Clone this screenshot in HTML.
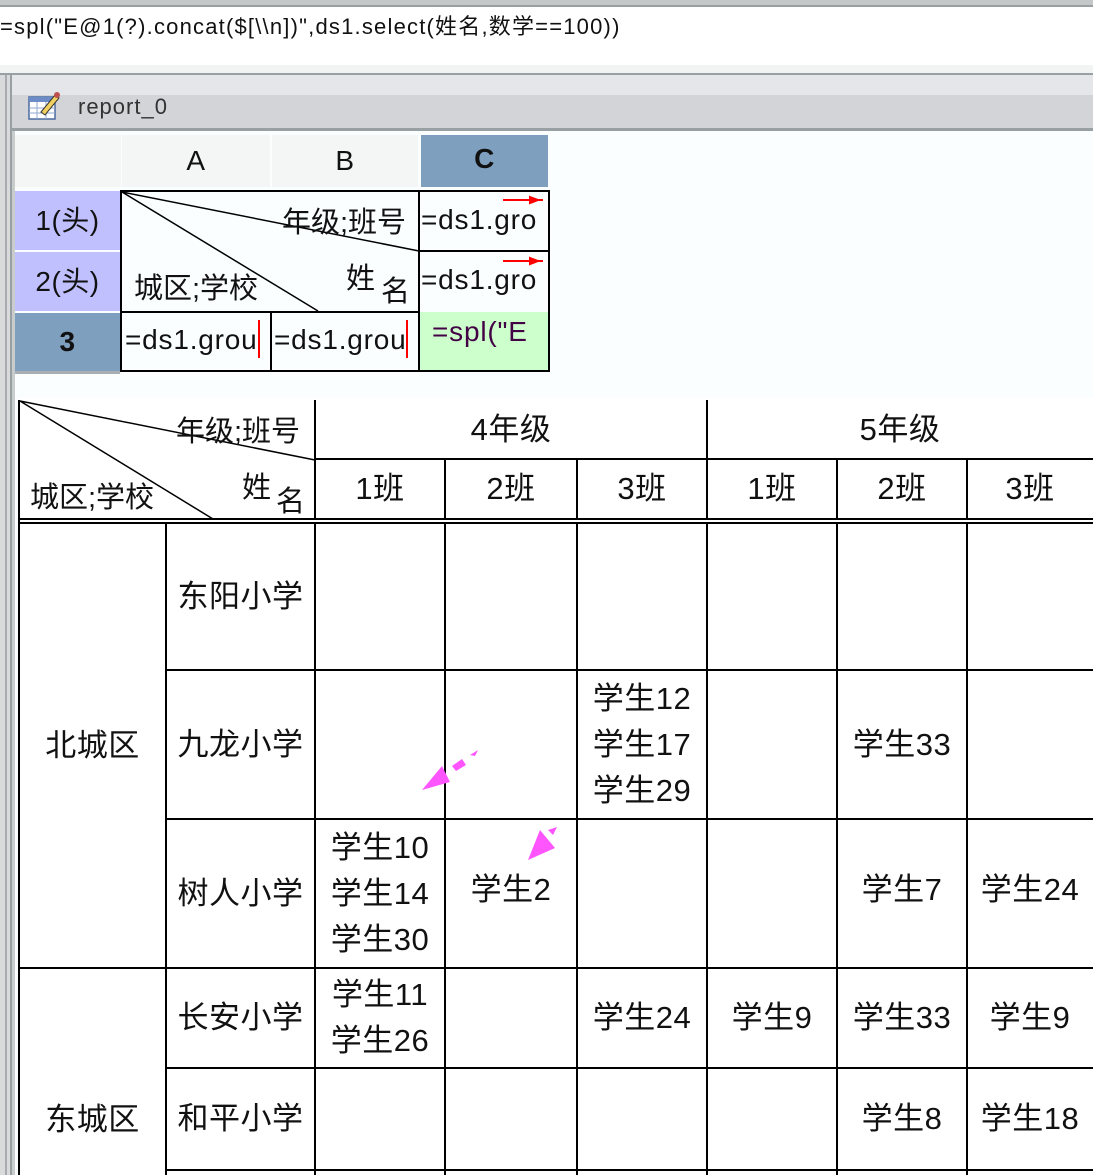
<!DOCTYPE html>
<html><head><meta charset="utf-8"><style>
*{margin:0;padding:0;box-sizing:border-box}
html,body{width:1093px;height:1175px;overflow:hidden}
body{background:#fafefe;position:relative;font-family:"Liberation Sans","WenQuanYi Zen Hei","Noto Sans CJK SC",sans-serif;color:#111}
.a{position:absolute;white-space:nowrap}
.c{position:absolute;display:flex;align-items:center;justify-content:center;text-align:center;font-size:31px;line-height:46px;white-space:nowrap;letter-spacing:0.5px}
.s{font-size:28px}
</style></head><body>
<svg class="a" style="left:0;top:0;overflow:hidden" width="1093" height="1175">
<rect x="0" y="0" width="1093" height="5" fill="#c4c8c8"/>
<rect x="0" y="5" width="1093" height="2" fill="#98a0a4"/>
<rect x="0" y="7" width="1093" height="58" fill="#fff"/>
<rect x="0" y="65" width="1093" height="8" fill="#f2f4f4"/>
<rect x="0" y="73" width="1093" height="2" fill="#98a0a4"/>
<rect x="0" y="75" width="12" height="1100" fill="#d8dadc"/>
<rect x="5" y="75" width="2" height="1100" fill="#a8acb0"/>
<rect x="10" y="75" width="2" height="1100" fill="#98a0a4"/>
<rect x="12" y="75" width="1081" height="20" fill="#e4e6ea"/>
<rect x="12" y="95" width="1081" height="34" fill="#d2d4d8"/>
<rect x="12" y="128" width="1081" height="3" fill="#98a0a4"/>
<rect x="12" y="131" width="3" height="1044" fill="#c8cccc"/>
<rect x="29" y="97" width="26" height="22" fill="#fff" stroke="#4a6aa0" stroke-width="1.5"/>
<rect x="29" y="97" width="26" height="5" fill="#6c8cc8"/>
<path d="M29 108h26M29 113h26M37 102v17M46 102v17" stroke="#90a8d0" stroke-width="1"/>
<path d="M41 112l14-17 4 3-14 17z" fill="#f0d060" stroke="#333" stroke-width="1"/>
<circle cx="57" cy="95" r="3" fill="#c05050"/>
<rect x="15" y="135" width="106" height="52" fill="#f4f6f6"/>
<rect x="122" y="135" width="148" height="52" fill="#f4f6f6"/>
<rect x="272" y="135" width="146" height="52" fill="#f4f6f6"/>
<rect x="421" y="135" width="127" height="52" fill="#7f9fbf"/>
<rect x="15" y="191" width="105" height="59" fill="#c0c0fe"/>
<rect x="15" y="252" width="105" height="59" fill="#c0c0fe"/>
<rect x="15" y="313" width="105" height="58" fill="#7f9fbf"/>
<rect x="15" y="371" width="105" height="3" fill="#a8aeb4"/>
<rect x="420" y="312" width="128" height="59" fill="#ccffcc"/>
<g stroke="#000" stroke-width="2" fill="none">
<rect x="121" y="191" width="428" height="180"/>
<path d="M419 191v180M419 251h130M121 312h298M271 312v59"/>
<path d="M122 192L419 251M122 192L318 311" stroke-width="1.5"/>
</g>
<path d="M503 200h40M530 197l8 3-8 3z" stroke="red" stroke-width="2" fill="red"/>
<path d="M503 261h40M530 258l8 3-8 3z" stroke="red" stroke-width="2" fill="red"/>
<path d="M259 320v38M407 320v38" stroke="red" stroke-width="2"/>
<rect x="19" y="398" width="1074" height="777" fill="#fff"/>
<g stroke="#000" stroke-width="2" fill="none">
<path d="M19 400v775M315 400v120M707 400v120M315 459h778M445 459v61M577 459v61M837 459v61M967 459v61M19 519h1074M19 523h1074"/>
<path d="M166 523v652M315 523v652M445 523v652M577 523v652M707 523v652M837 523v652M967 523v652"/>
<path d="M166 670h927M166 819h927M19 968h1074M166 1068h927M166 1170h927"/>
<path d="M20 401L315 460M20 401L213 519" stroke-width="1.5"/>
</g>
<path d="M422 790l20-24 8 16z" fill="#ff55ff"/>
<path d="M452 766l10-7 4 6-10 6zM470 755l8-5-3 6z" fill="#ff55ff"/>
<path d="M528 860l12-30 15 18z" fill="#ff55ff"/>
<path d="M548 830l9-3-4 8z" fill="#ff55ff"/>
</svg>
<div class="a" style="left:0;top:9px;font-size:22px;letter-spacing:1.2px">=spl("E@1(?).concat($[\\n])",ds1.select(姓名,数学==100))</div>
<div class="a" style="left:78px;top:94px;font-size:22px;color:#333;letter-spacing:1px">report_0</div>
<div class="c s" style="left:122px;top:135px;width:148px;height:52px">A</div>
<div class="c s" style="left:272px;top:135px;width:146px;height:52px">B</div>
<div class="c s" style="left:421px;top:133px;width:127px;height:52px;font-weight:bold">C</div>
<div class="c s" style="left:15px;top:191px;width:105px;height:59px">1(头)</div>
<div class="c s" style="left:15px;top:252px;width:105px;height:59px">2(头)</div>
<div class="c s" style="left:15px;top:313px;width:105px;height:58px;font-weight:bold">3</div>
<div class="a" style="left:282px;top:199px;font-size:29px">年级;班号</div>
<div class="a" style="left:134px;top:265px;font-size:29px">城区;学校</div>
<div class="a" style="left:346px;top:255px;font-size:29px">姓</div>
<div class="a" style="left:381px;top:268px;font-size:29px">名</div>
<div class="a" style="left:421px;top:204px;font-size:28px;letter-spacing:0.8px">=ds1.gro</div>
<div class="a" style="left:421px;top:264px;font-size:28px;letter-spacing:0.8px">=ds1.gro</div>
<div class="a" style="left:125px;top:324px;font-size:28px;width:132px;overflow:hidden;letter-spacing:0.8px">=ds1.grou</div>
<div class="a" style="left:274px;top:324px;font-size:28px;width:132px;overflow:hidden;letter-spacing:0.8px">=ds1.grou</div>
<div class="a" style="left:432px;top:316px;font-size:28px;color:#404;letter-spacing:0.8px">=spl("E</div>
<div class="a" style="left:176px;top:408px;font-size:29px">年级;班号</div>
<div class="a" style="left:30px;top:474px;font-size:29px">城区;学校</div>
<div class="a" style="left:242px;top:464px;font-size:29px">姓</div>
<div class="a" style="left:276px;top:478px;font-size:29px">名</div>
<div class="c" style="left:315px;top:400px;width:392px;height:59px">4年级</div>
<div class="c" style="left:707px;top:400px;width:386px;height:59px">5年级</div>
<div class="c" style="left:315px;top:459px;width:130px;height:60px">1班</div>
<div class="c" style="left:445px;top:459px;width:132px;height:60px">2班</div>
<div class="c" style="left:577px;top:459px;width:130px;height:60px">3班</div>
<div class="c" style="left:707px;top:459px;width:130px;height:60px">1班</div>
<div class="c" style="left:837px;top:459px;width:130px;height:60px">2班</div>
<div class="c" style="left:967px;top:459px;width:126px;height:60px">3班</div>
<div class="c" style="left:19px;top:523px;width:147px;height:445px">北城区</div>
<div class="c" style="left:19px;top:1097px;width:147px;height:46px">东城区</div>
<div class="c" style="left:166px;top:523px;width:149px;height:147px">东阳小学</div>
<div class="c" style="left:166px;top:670px;width:149px;height:149px">九龙小学</div>
<div class="c" style="left:166px;top:819px;width:149px;height:149px">树人小学</div>
<div class="c" style="left:166px;top:968px;width:149px;height:100px">长安小学</div>
<div class="c" style="left:166px;top:1068px;width:149px;height:102px">和平小学</div>
<div class="c" style="left:577px;top:670px;width:130px;height:149px">学生12<br>学生17<br>学生29</div>
<div class="c" style="left:837px;top:670px;width:130px;height:149px">学生33</div>
<div class="c" style="left:315px;top:819px;width:130px;height:149px">学生10<br>学生14<br>学生30</div>
<div class="c" style="left:445px;top:819px;width:132px;height:142px">学生2</div>
<div class="c" style="left:837px;top:819px;width:130px;height:142px">学生7</div>
<div class="c" style="left:967px;top:819px;width:126px;height:142px">学生24</div>
<div class="c" style="left:315px;top:968px;width:130px;height:100px">学生11<br>学生26</div>
<div class="c" style="left:577px;top:968px;width:130px;height:100px">学生24</div>
<div class="c" style="left:707px;top:968px;width:130px;height:100px">学生9</div>
<div class="c" style="left:837px;top:968px;width:130px;height:100px">学生33</div>
<div class="c" style="left:967px;top:968px;width:126px;height:100px">学生9</div>
<div class="c" style="left:837px;top:1068px;width:130px;height:102px">学生8</div>
<div class="c" style="left:967px;top:1068px;width:126px;height:102px">学生18</div>
</body></html>
